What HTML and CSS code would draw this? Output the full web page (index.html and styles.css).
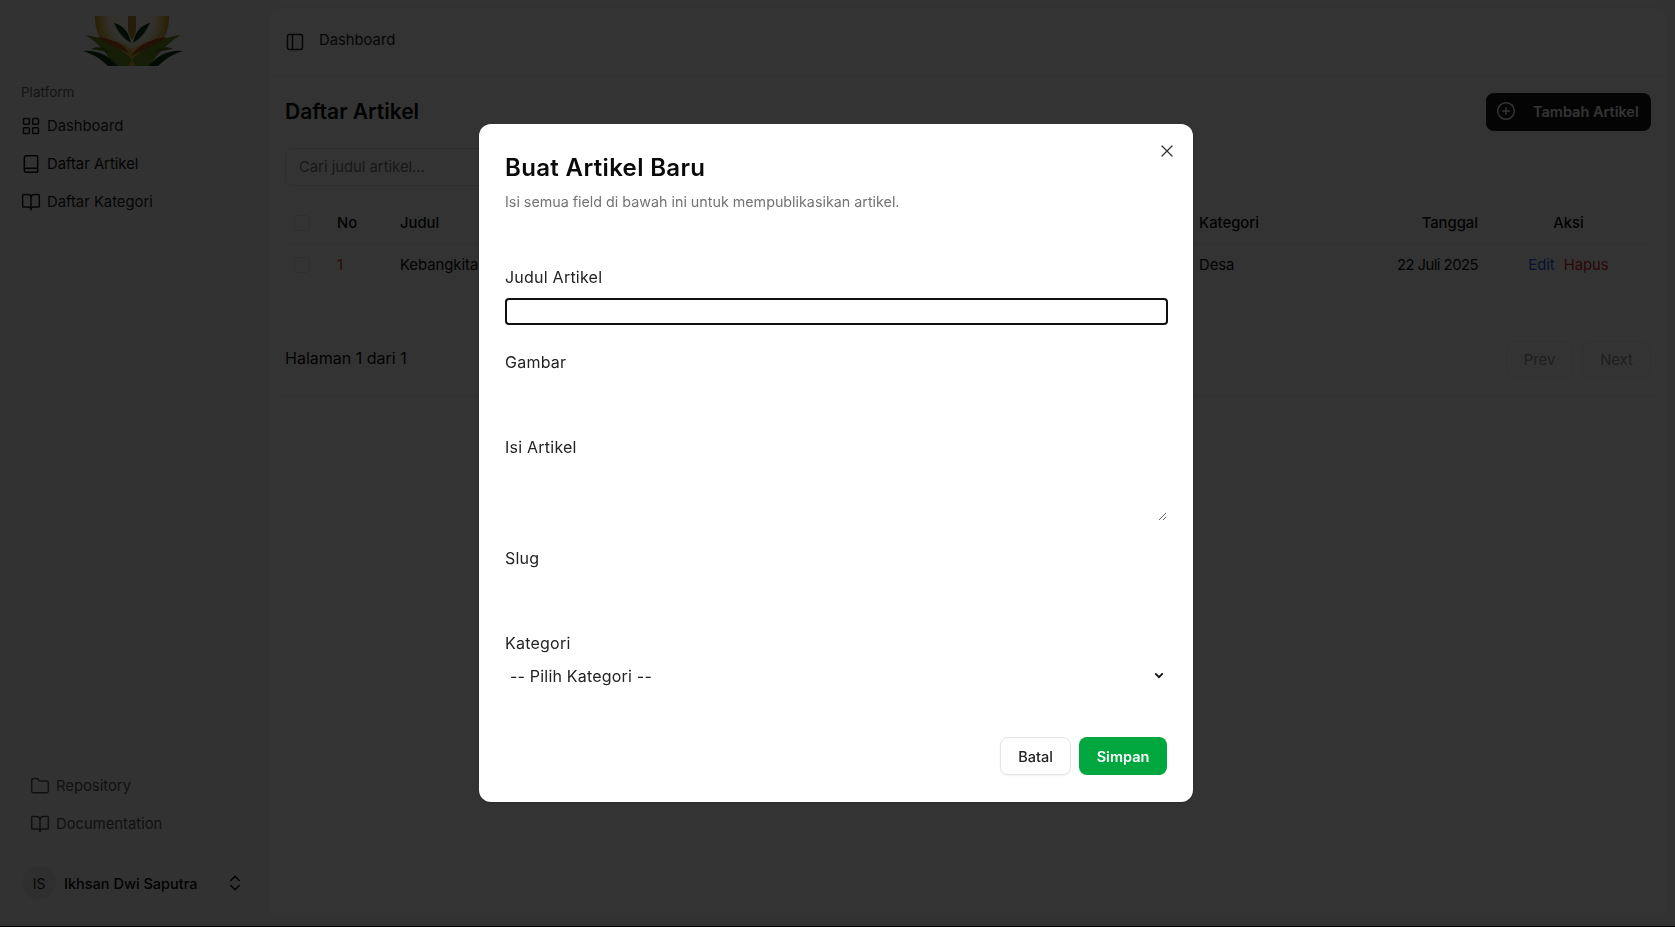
FILE: index.html
```html
<!DOCTYPE html>
<html lang="id">
<head>
<meta charset="utf-8">
<title>Daftar Artikel</title>
<link rel="stylesheet" href="styles.css">
</head>
<body>
<div class="app">
  <aside class="sidebar">
    <div class="logo-box">
      <svg class="logo" viewBox="0 0 100 50" width="100" height="50">
        <defs>
          <radialGradient id="sun" cx="49" cy="6" r="37" gradientUnits="userSpaceOnUse">
            <stop offset="0" stop-color="#ffffff"/>
            <stop offset=".6" stop-color="#f8f0d8"/>
            <stop offset=".9" stop-color="#e2b23a"/>
            <stop offset="1" stop-color="#c8941e"/>
          </radialGradient>
        </defs>
        <circle cx="49" cy="3" r="37" fill="url(#sun)"/>
        <path d="M45 0H53V13C53 17 51 21 49 24C47 21 45 17 45 13Z" fill="#c28a2e"/>
        <path d="M31 7C40 9 46 16 48 27C41 23 35 16 31 7ZM67 7C58 9 52 16 50 27C57 23 63 16 67 7Z" fill="#123d18"/>
        <path d="M26 25C34 24 44 29 49 36C56 29 64 24 74 25L60 50H38Z" fill="#d9b13a"/>
        <path d="M2 19C20 21 38 31 49 44L45 50H30C24 36 14 26 2 19ZM98 19C80 21 60 31 49 44L53 50H66C76 36 86 26 98 19Z" fill="#71921f"/>
        <path d="M14 21C28 22 40 28 46 37C36 33 24 28 14 21ZM84 21C70 22 56 29 48 40C58 35 74 29 84 21Z" fill="#b4521b"/>
        <path d="M0 35C14 33 26 40 35 50H25C18 43 10 38 0 35ZM100 35C86 33 74 40 65 50H75C82 43 90 38 100 35Z" fill="#123d18"/>
        <path d="M8 33C14 30 22 31 29 37C22 35 14 34 8 33ZM90 33C84 30 76 31 69 37C76 35 84 34 90 33Z" fill="#4f7a1c"/>
      </svg>
    </div>
    <div class="group-label">Platform</div>
    <nav class="nav">
      <a class="nav-item"><svg class="ico" viewBox="0 0 24 24"><rect x="3" y="3" width="7" height="7" rx="1"/><rect x="14" y="3" width="7" height="7" rx="1"/><rect x="3" y="14" width="7" height="7" rx="1"/><rect x="14" y="14" width="7" height="7" rx="1"/></svg>Dashboard</a>
      <a class="nav-item active"><svg class="ico" viewBox="0 0 24 24"><path d="M4 19.500v-15A2.500 2.500 0 0 1 6.500 2H19a1 1 0 0 1 1 1v18a1 1 0 0 1-1 1H6.500a2.500 2.500 0 0 1 0-5H20"/></svg>Daftar Artikel</a>
      <a class="nav-item"><svg class="ico" viewBox="0 0 24 24"><path d="M12 7v14"/><path d="M3 18a1 1 0 0 1-1-1V4a1 1 0 0 1 1-1h5a4 4 0 0 1 4 4 4 4 0 0 1 4-4h5a1 1 0 0 1 1 1v13a1 1 0 0 1-1 1h-6a3 3 0 0 0-3 3 3 3 0 0 0-3-3z"/></svg>Daftar Kategori</a>
    </nav>
    <div class="spacer"></div>
    <nav class="nav nav-secondary">
      <a class="nav-item muted"><svg class="ico" viewBox="0 0 24 24"><path d="M20 20a2 2 0 0 0 2-2V8a2 2 0 0 0-2-2h-7.900a2 2 0 0 1-1.690-.9L9.600 3.900A2 2 0 0 0 7.930 3H4a2 2 0 0 0-2 2v13a2 2 0 0 0 2 2Z"/></svg>Repository</a>
      <a class="nav-item muted"><svg class="ico" viewBox="0 0 24 24"><path d="M12 7v14"/><path d="M3 18a1 1 0 0 1-1-1V4a1 1 0 0 1 1-1h5a4 4 0 0 1 4 4 4 4 0 0 1 4-4h5a1 1 0 0 1 1 1v13a1 1 0 0 1-1 1h-6a3 3 0 0 0-3 3 3 3 0 0 0-3-3z"/></svg>Documentation</a>
    </nav>
    <div class="user">
      <span class="avatar">IS</span>
      <span class="user-name">Ikhsan Dwi Saputra</span>
      <svg class="ico" viewBox="0 0 24 24"><path d="m7 15 5 5 5-5"/><path d="m7 9 5-5 5 5"/></svg>
    </div>
  </aside>
  <main class="main">
    <header class="topbar">
      <svg class="ico" viewBox="0 0 24 24"><rect x="3" y="3" width="18" height="18" rx="2"/><path d="M9 3v18"/></svg>
      <span class="crumb">Dashboard</span>
    </header>
    <section class="content">
      <div class="head-row">
        <h1>Daftar Artikel</h1>
        <button class="add-btn"><svg class="ico" viewBox="0 0 24 24"><circle cx="12" cy="12" r="10"/><path d="M8 12h8"/><path d="M12 8v8"/></svg>Tambah Artikel</button>
      </div>
      <div class="search">Cari judul artikel...</div>
      <div class="table">
        <div class="row row-head">
          <span class="check"></span><span>No</span><span>Judul</span><span>Kategori</span><span class="right">Tanggal</span><span class="center">Aksi</span>
        </div>
        <div class="row row-body">
          <span class="check"></span><span class="num">1</span><span>Kebangkitan</span><span>Desa</span><span class="right date">22 Juli 2025</span>
          <span class="center actions"><span class="edit">Edit</span><span class="del">Hapus</span></span>
        </div>
      </div>
      <div class="pager">
        <span class="page-info">Halaman 1 dari 1</span>
        <div class="pager-btns"><span class="page-btn prev">Prev</span><span class="page-btn next">Next</span></div>
      </div>
    </section>
  </main>
</div>
<div class="overlay"></div>
<div class="modal">
  <svg class="close" viewBox="0 0 24 24"><path d="M18 6 6 18"/><path d="m6 6 12 12"/></svg>
  <h2>Buat Artikel Baru</h2>
  <p class="desc">Isi semua field di bawah ini untuk mempublikasikan artikel.</p>
  <form class="form">
    <div class="field"><label>Judul Artikel</label><div class="input focused"></div></div>
    <div class="field"><label>Gambar</label><div class="input"></div></div>
    <div class="field"><label>Isi Artikel</label><div class="textarea"><svg class="grip" viewBox="0 0 10 10"><path d="M1 9 9 1M5.500 9 9 5.500"/></svg></div></div>
    <div class="field"><label>Slug</label><div class="input"></div></div>
    <div class="field"><label>Kategori</label>
      <div class="select"><span>-- Pilih Kategori --</span><svg class="chev" viewBox="0 0 12 8"><path d="M1.500 1.500 6 6l4.500-4.500"/></svg></div>
    </div>
  </form>
  <div class="modal-actions">
    <button class="btn-cancel">Batal</button>
    <button class="btn-save">Simpan</button>
  </div>
</div>
</body>
</html>
```
FILE: styles.css
```css
* { box-sizing: border-box; }
html, body { margin: 0; height: 100%; }
body {
  background: #000;
  font-family: "Inter", "Liberation Sans", sans-serif;
  color: #0a0a0a;
  overflow: hidden;
}
.app {
  display: flex;
  height: 926px;
  background: #fafafa;
}
.sidebar {
  width: 267px;
  flex: none;
  display: flex;
  flex-direction: column;
  padding: 16px 22px 26px 21px;
}
.logo-box {
  height: 50px;
  display: flex;
  justify-content: center;
}
.logo { display: block; }
.group-label {
  margin-top: 16px;
  font-size: 13.500px;
  line-height: 20px;
  color: #666;
}
.nav { display: flex; flex-direction: column; margin: 5px -5px 0; }
.nav-item {
  height: 38px;
  display: flex;
  align-items: center;
  gap: 6px;
  padding: 0 5px;
  border-radius: 8px;
  font-size: 14.800px;
  color: #222;
}
.nav-item.active { background: #f7f7f7; color: #111; }
.nav-item.muted { color: #555; }
.ico {
  width: 20px;
  height: 20px;
  flex: none;
  fill: none;
  stroke: currentColor;
  stroke-width: 1.800;
  stroke-linecap: round;
  stroke-linejoin: round;
}
.spacer { flex: 1; }
.nav-secondary { margin: 0 0 23px 4px; }
.user { display: flex; align-items: center; height: 34px; padding-left: 1px; font-size: 14.500px; }
.avatar {
  width: 34px;
  height: 34px;
  border-radius: 50%;
  background: #ececec;
  display: flex;
  align-items: center;
  justify-content: center;
  font-size: 14px;
  color: #222;
}
.user-name { margin-left: 8px; flex: 1; font-weight: 500; }
.main {
  flex: 1;
  margin: 8px 7px 8px 1px;
  background: #fff;
  border-radius: 12px;
  display: flex;
  flex-direction: column;
  min-width: 0;
  box-shadow: 0 0 0 1px #f0f0f0;
}
.topbar {
  height: 68px;
  flex: none;
  display: flex;
  align-items: center;
  gap: 14px;
  padding-left: 17px;
  font-size: 14.800px;
  color: #222;
  border-bottom: 1px solid #eee;
}
.crumb { margin-bottom: 3px; }
.content {
  padding: 17px 17px 18px 17px;
  border-bottom: 1px solid #eee;
  border-radius: 0 0 12px 12px;
}
.head-row {
  display: flex;
  justify-content: space-between;
  align-items: center;
  height: 38px;
}
h1 { margin: 0; font-size: 21px; line-height: 28px; font-weight: 600; }
.add-btn {
  width: 165px;
  height: 38px;
  border: 0;
  border-radius: 8px;
  background: #171717;
  color: #fff;
  display: flex;
  align-items: center;
  gap: 17px;
  padding: 0 10px 2px;
  white-space: nowrap;
  font: 600 14.500px "Inter", sans-serif;
}
.search {
  margin-top: 17px;
  height: 38px;
  width: 400px;
  border: 1px solid #e5e5e5;
  border-radius: 8px;
  padding: 0 13px;
  display: flex;
  align-items: center;
  font-size: 14.800px;
  color: #777;
}
.table { margin-top: 16px; }
.row {
  display: grid;
  grid-template-columns: 43px 63px 799px 170px 109px 1fr;
  align-items: center;
  font-size: 14.800px;
  padding-left: 9px;
  white-space: nowrap;
}
.row-head { height: 43px; font-weight: 500; border-bottom: 1px solid #eee; }
.row-body { height: 39px; }
.check {
  width: 16px;
  height: 16px;
  border: 1px solid #e5e5e5;
  border-radius: 4px;
}
.num { color: #c2410c; }
.right { text-align: right; }
.date { letter-spacing: -.5px; }
.center { text-align: center; padding-left: 8px; }
.actions { display: flex; gap: 9px; justify-content: center; }
.edit { color: #2563eb; }
.del { color: #dc2626; }
.pager {
  margin-top: 57px;
  display: flex;
  justify-content: space-between;
  align-items: center;
  font-size: 16px;
}
.page-info { margin-bottom: 4px; }
.pager-btns { display: flex; gap: 9px; }
.page-btn {
  height: 37px;
  border: 1px solid #eee;
  border-radius: 8px;
  display: flex;
  align-items: center;
  justify-content: center;
  font-size: 14.800px;
  color: #999;
}
.prev { width: 67px; }
.next { width: 69px; }
.overlay {
  position: fixed;
  inset: 0 0 1px 0;
  background: rgba(0, 0, 0, .8);
}
.modal {
  position: fixed;
  left: 479px;
  top: 124px;
  width: 714px;
  height: 678px;
  background: #fff;
  border-radius: 12px;
  padding: 28px 26px 26px;
  box-shadow: 0 1px 3px rgba(0, 0, 0, .2);
}
.close {
  position: absolute;
  right: 16.500px;
  top: 16.500px;
  width: 20px;
  height: 20px;
  fill: none;
  stroke: #333;
  stroke-width: 1.500;
  stroke-linecap: round;
}
h2 { margin: 0; font-size: 24px; line-height: 32px; font-weight: 600; letter-spacing: .35px; }
.desc { margin: 8px 0 0; font-size: 14.300px; line-height: 20px; color: #737373; }
.form { margin-top: 53px; display: flex; flex-direction: column; }
.field { display: flex; flex-direction: column; }
label { font-size: 16px; line-height: 24px; color: #222; height: 24px; letter-spacing: .23px; }
.input { height: 27px; margin: 9px -1px 25px 0; }
.input.focused { border: 2px solid #111; border-radius: 4px; }
.textarea { height: 55px; margin: 7px -1px 25px 0; position: relative; }
.grip {
  position: absolute;
  right: 1px;
  bottom: 0;
  width: 9px;
  height: 9px;
  fill: none;
  stroke: #555;
  stroke-width: 1;
}
.select {
  margin-top: 7px;
  height: 27px;
  display: flex;
  align-items: center;
  justify-content: space-between;
  padding: 0 3px 0 5px;
  font-size: 16px;
  letter-spacing: .2px;
  color: #222;
}
.chev { width: 10px; height: 7px; fill: none; stroke: #111; stroke-width: 2.200; }
.modal-actions {
  position: absolute;
  right: 26px;
  bottom: 27px;
  display: flex;
  gap: 8px;
}
.modal-actions button { height: 38px; border-radius: 8px; font: 500 14.500px "Inter", sans-serif; }
.btn-cancel {
  width: 71px;
  background: #fff;
  border: 1px solid #e5e5e5;
  box-shadow: 0 1px 2px rgba(0, 0, 0, .06);
  color: #222;
}
.modal-actions .btn-save {
  width: 88px;
  background: #00a63e;
  border: 0;
  color: #fff;
  font-weight: 600;
}
```
